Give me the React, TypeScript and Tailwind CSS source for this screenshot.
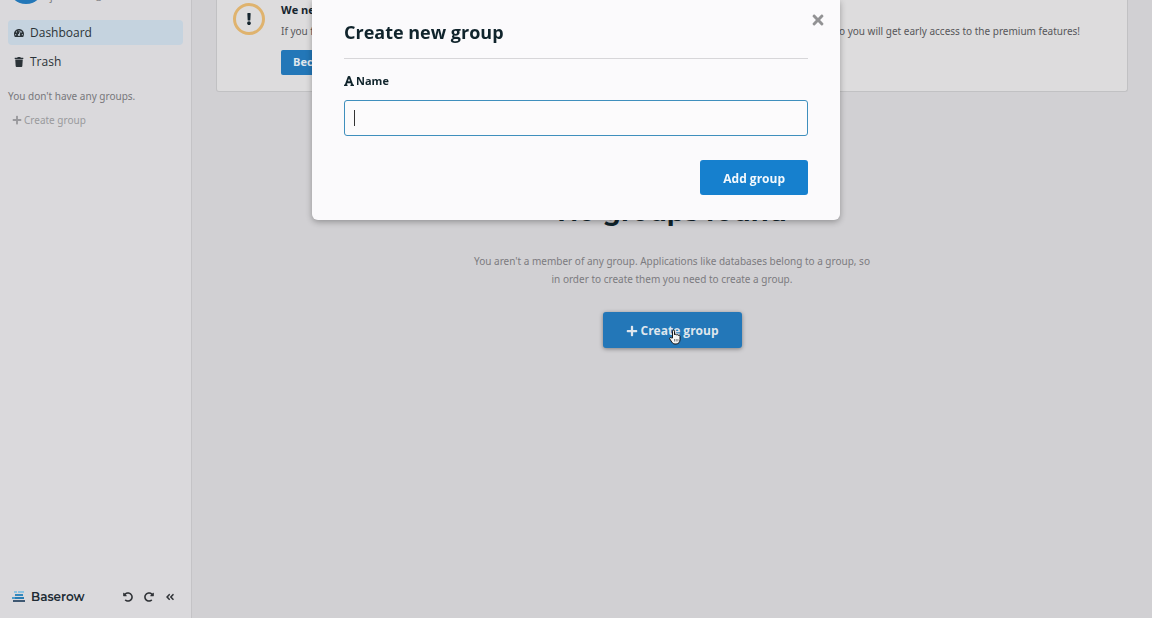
import { useState } from 'react';
import {
  FaFont,
  FaPlus,
  FaRedoAlt,
  FaTachometerAlt,
  FaTimes,
  FaTrash,
  FaUndoAlt,
  FaAngleDoubleLeft,
  FaExclamation,
} from 'react-icons/fa';

function Logo() {
  return (
    <svg className="h-3 w-3.5 shrink-0" viewBox="0 0 14 12" aria-hidden="true">
      <path fill="#8cc3e2" d="M2 0h3v2H2zM6 0h6v2H6z" />
      <path fill="#3388bd" d="M3 3h8v2H3z" />
      <path fill="#4b9ccb" d="M0 6h3v2H0z" />
      <path fill="#287db4" d="M3 6h9v2H3z" />
      <path fill="#3f5872" d="M1 9h6v2H1zM7 9h6v2H7z" />
    </svg>
  );
}

function Sidebar() {
  return (
    <aside className="flex w-48 shrink-0 flex-col border-r border-[#c4c3c6] bg-[#dad9dc]">
      <div className="-mt-8 flex items-center gap-1.5 px-2">
        <div className="h-9 w-9 shrink-0 rounded-full bg-[#2377b8]" />
        <div className="self-end font-['Noto_Sans',sans-serif] text-[10px] leading-4 text-[#77777b]">janet-flok@baserow.io</div>
      </div>
      <nav className="mt-4 flex flex-col gap-1 px-2 text-xs text-[#2b3338]">
        <a href="#dashboard" className="flex h-[25px] items-center gap-1.5 rounded-sm bg-[#c5d3df] px-1.5">
          <FaTachometerAlt className="h-2.5 w-2.5" />
          Dashboard
        </a>
        <a href="#trash" className="flex h-[25px] items-center gap-1.5 px-1.5">
          <FaTrash className="h-2.5 w-2.5" />
          Trash
        </a>
      </nav>
      <p className="mt-3.5 px-2 font-['Noto_Sans',sans-serif] text-[10px] leading-4 text-[#77777b]">You don't have any groups.</p>
      <button className="mt-2 flex items-center gap-0.5 px-3 font-['Noto_Sans',sans-serif] text-[10px] leading-4 text-[#99999d]">
        <FaPlus className="h-2.5 w-2.5" />
        Create group
      </button>
      <div className="mt-auto flex h-[43px] items-center px-3">
        <Logo />
        <span className="ml-[5px] font-['Montserrat','Inter',sans-serif] text-xs font-semibold text-[#202b34]">Baserow</span>
        <div className="ml-auto flex items-center gap-[11px] pr-1 text-[#303337]">
          <button aria-label="Undo"><FaUndoAlt className="h-2.5 w-2.5" /></button>
          <button aria-label="Redo"><FaRedoAlt className="h-2.5 w-2.5" /></button>
          <button aria-label="Collapse sidebar"><FaAngleDoubleLeft className="h-2.5 w-2.5" /></button>
        </div>
      </div>
    </aside>
  );
}

function PremiumNotice() {
  return (
    <section className="mx-6 flex items-start gap-4 overflow-hidden rounded-b-[3px] border border-t-0 border-[#c1c1c3] bg-[#dddcdd] px-4 pb-4">
      <div className="mt-[3px] flex h-8 w-8 shrink-0 items-center justify-center rounded-full border-3 border-[#dfb36e] text-[#15252e]">
        <FaExclamation className="h-3 w-3" />
      </div>
      <div className="min-w-0 flex-1">
        <h2 className="mt-0.5 text-[11px] leading-4 font-bold text-[#15252e]">We need your help!</h2>
        <p className="mt-1 font-['Noto_Sans',sans-serif] text-[10px] leading-[18px] whitespace-nowrap text-[#57575a]">
          If you find Baserow helpful, please consider becoming a sponsor. Your support helps us to keep improving Baserow, also you will get early access to the premium features!
        </p>
        <button className="mt-2.5 h-[25px] rounded-xs bg-[#2377b8] px-3 text-[11px] font-bold text-[#e0e7ed]">Become a sponsor</button>
      </div>
    </section>
  );
}

function CreateGroupModal({ onClose }: { onClose: () => void }) {
  const [name, setName] = useState('');

  return (
    <div className="fixed inset-x-0 top-0 z-10 flex justify-center">
      <form
        role="dialog"
        aria-labelledby="modal-title"
        className="relative w-full max-w-[528px] rounded-b-md bg-[#fbfafc] px-8 pt-4 pb-[25px] shadow-[0_2px_6px_rgba(0,0,0,0.3)]"
        onSubmit={(e) => e.preventDefault()}
      >
        <button type="button" aria-label="Close" onClick={onClose} className="absolute top-3 right-3.5 text-[#929294]">
          <FaTimes className="h-4 w-4" />
        </button>
        <h1 id="modal-title" className="border-b border-[#d7d6d9] pb-2.5 text-lg leading-8 font-bold text-[#10242c]">
          Create new group
        </h1>
        <label htmlFor="group-name" className="mt-3 flex items-center gap-0.5 text-[11px] leading-5 font-bold text-[#10242c]">
          <FaFont className="h-3 w-2.5" />
          Name
        </label>
        <div className="relative mt-[9px]">
          <input
            id="group-name"
            value={name}
            onChange={(e) => setName(e.target.value)}
            className="block h-9 w-full rounded-[3px] border border-[#3f8fbd] bg-[#fcfbfc] px-2.5 text-sm caret-transparent outline-none"
          />
          {!name && <span className="pointer-events-none absolute top-2.5 left-2.5 h-4 w-px bg-[#333]" />}
        </div>
        <div className="mt-6 flex justify-end">
          <button type="submit" className="h-[35px] rounded-[3px] bg-[#1680ce] px-[23px] pt-0.5 text-xs font-bold text-[#f3f8fc]">
            Add group
          </button>
        </div>
      </form>
    </div>
  );
}

function PointerHand() {
  return (
    <svg className="pointer-events-none absolute top-[17px] left-[66px] h-4 w-3" viewBox="0 0 12 16" aria-hidden="true">
      <path
        d="M3.5 9V2.2c0-1.6 2-1.6 2 0v3.6c.3-.8 1.7-.8 1.9.2.5-.7 1.7-.5 1.8.4.8-.5 1.8 0 1.8 1v3.2c0 2.5-1.4 4.4-3.9 4.4H6c-1.5 0-2.4-.7-3.2-1.9L.8 10C.1 8.8 1.5 8 2.4 8.8z"
        fill="#f4f4f4"
        stroke="#171717"
        strokeWidth="1"
        strokeLinejoin="round"
      />
      <path d="M5.5 10v2.5M7.2 10v2.5M8.9 10v2.5" stroke="#333" strokeWidth=".6" />
    </svg>
  );
}

export default function App() {
  const [open, setOpen] = useState(true);

  return (
    <div className="flex h-screen overflow-hidden bg-[#d1d0d3] font-['Open_Sans','Noto_Sans',sans-serif]">
      <Sidebar />
      <main className="min-w-0 flex-1">
        <PremiumNotice />
        <section className="mx-auto mt-[100px] flex max-w-[400px] flex-col items-center text-center">
          <h2 className="font-['Montserrat','Inter',sans-serif] text-[26px] leading-10 font-bold text-[#10242c]">No groups found</h2>
          <p className="mt-5 font-['Noto_Sans',sans-serif] text-[10px] leading-[18px] text-[#7c7b7f]">
            You aren't a member of any group. Applications like databases belong to a group, so in order to create them you need to create a group.
          </p>
          <button
            onClick={() => setOpen(true)}
            className="relative mt-6 flex h-9 items-center gap-[3px] rounded-[3px] bg-[#2377b8] px-[23px] pt-0.5 text-xs font-bold text-[#dfe6ed] shadow-[0_1px_4px_rgba(0,0,0,0.4)]"
          >
            <FaPlus className="h-3 w-3" />
            Create group
            <PointerHand />
          </button>
        </section>
      </main>
      {open && <CreateGroupModal onClose={() => setOpen(false)} />}
    </div>
  );
}
